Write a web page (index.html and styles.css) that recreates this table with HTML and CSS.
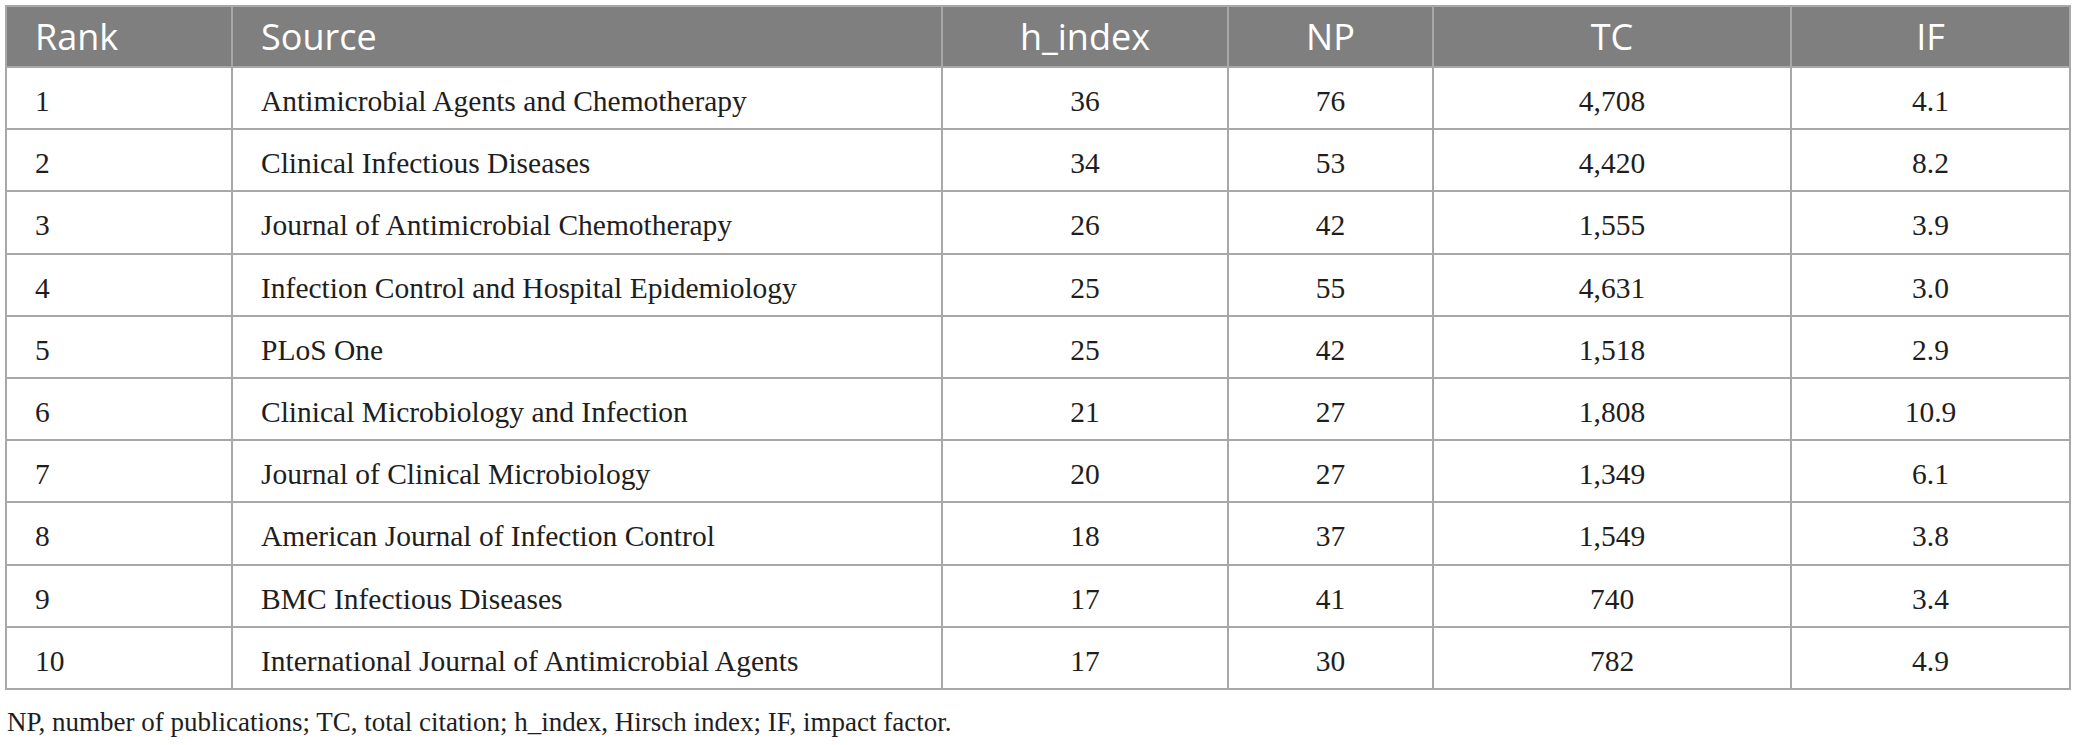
FILE: index.html
```html
<!DOCTYPE html>
<html>
<head>
<meta charset="utf-8">
<link rel="stylesheet" href="styles.css">
</head>
<body>
<div class="wrap">
<table class="tbl">
<colgroup>
<col class="c-rank"><col class="c-src"><col class="c-h"><col class="c-np"><col class="c-tc"><col class="c-if">
</colgroup>
<thead>
<tr><th class="left">Rank</th><th class="left">Source</th><th>h_index</th><th>NP</th><th>TC</th><th>IF</th></tr>
</thead>
<tbody>
<tr><td class="left">1</td><td class="left">Antimicrobial Agents and Chemotherapy</td><td>36</td><td>76</td><td>4,708</td><td>4.1</td></tr>
<tr><td class="left">2</td><td class="left">Clinical Infectious Diseases</td><td>34</td><td>53</td><td>4,420</td><td>8.2</td></tr>
<tr><td class="left">3</td><td class="left">Journal of Antimicrobial Chemotherapy</td><td>26</td><td>42</td><td>1,555</td><td>3.9</td></tr>
<tr><td class="left">4</td><td class="left">Infection Control and Hospital Epidemiology</td><td>25</td><td>55</td><td>4,631</td><td>3.0</td></tr>
<tr><td class="left">5</td><td class="left">PLoS One</td><td>25</td><td>42</td><td>1,518</td><td>2.9</td></tr>
<tr><td class="left">6</td><td class="left">Clinical Microbiology and Infection</td><td>21</td><td>27</td><td>1,808</td><td>10.9</td></tr>
<tr><td class="left">7</td><td class="left">Journal of Clinical Microbiology</td><td>20</td><td>27</td><td>1,349</td><td>6.1</td></tr>
<tr><td class="left">8</td><td class="left">American Journal of Infection Control</td><td>18</td><td>37</td><td>1,549</td><td>3.8</td></tr>
<tr><td class="left">9</td><td class="left">BMC Infectious Diseases</td><td>17</td><td>41</td><td>740</td><td>3.4</td></tr>
<tr><td class="left">10</td><td class="left">International Journal of Antimicrobial Agents</td><td>17</td><td>30</td><td>782</td><td>4.9</td></tr>
</tbody>
</table>
<p class="note">NP, number of publications; TC, total citation; h_index, Hirsch index; IF, impact factor.</p>
</div>
</body>
</html>
```
FILE: styles.css
```css
html, body {
  margin: 0;
  padding: 0;
  background: #ffffff;
}
.wrap {
  padding: 5px 0 0 5px;
}
.tbl {
  border-collapse: collapse;
  table-layout: fixed;
  width: 2064px;
}
.c-rank { width: 226px; }
.c-src { width: 710px; }
.c-h { width: 286px; }
.c-np { width: 205px; }
.c-tc { width: 358px; }
.c-if { width: 279px; }
.tbl th, .tbl td {
  border: 2px solid #a8a8a8;
  text-align: center;
  padding: 0;
}
.tbl th {
  background: #7f7f7f;
  color: #ffffff;
  font-family: "Open Sans", sans-serif;
  font-weight: 400;
  font-size: 36px;
  height: 61px;
  line-height: 40px;
  box-sizing: border-box;
}
.tbl td {
  font-family: "Liberation Serif", serif;
  font-size: 29.5px;
  color: #1e1e1e;
  height: 62.2px;
  padding-top: 7px;
  box-sizing: border-box;
}
.tbl .left {
  text-align: left;
  padding-left: 28px;
}
.note {
  margin: 17px 0 0 2px;
  font-family: "Liberation Serif", serif;
  font-size: 27px;
  color: #1e1e1e;
}
```
